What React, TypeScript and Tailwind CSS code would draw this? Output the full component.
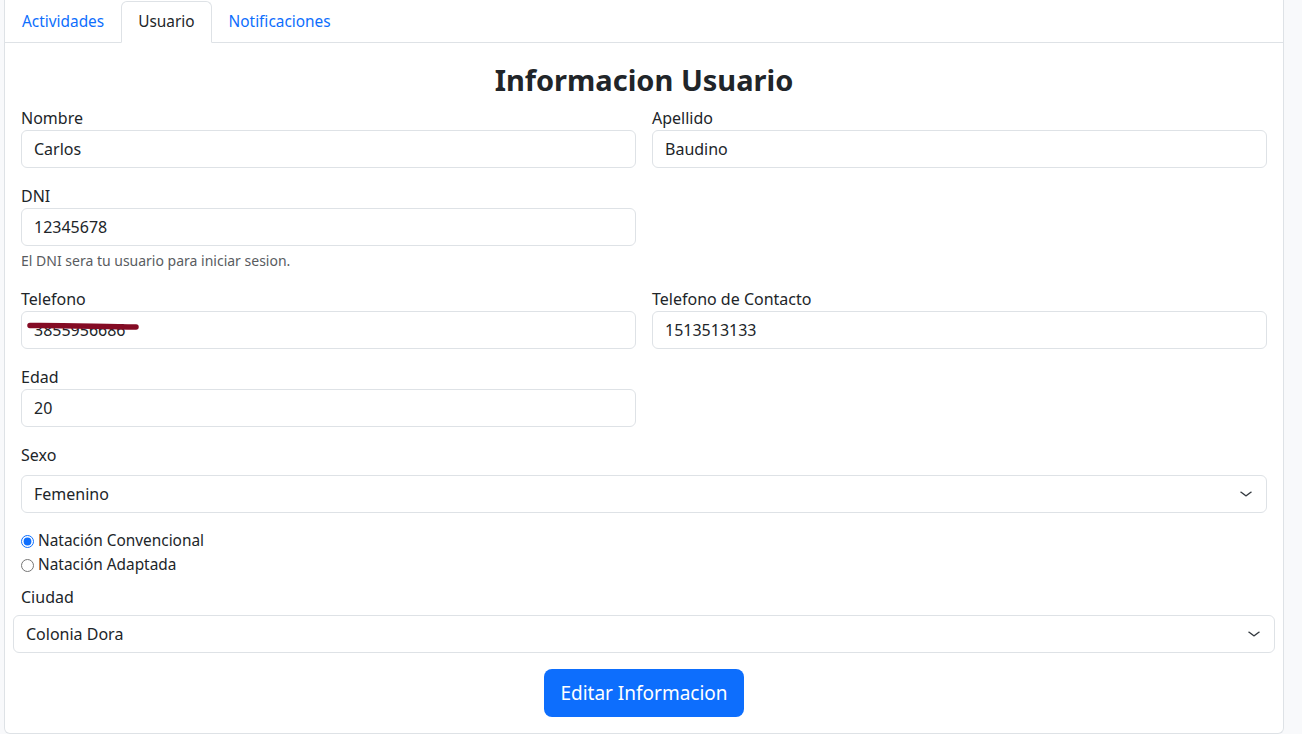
import React from 'react';

function Chevron() {
  return (
    <svg
      viewBox="0 0 16 16"
      className="absolute right-[12px] top-1/2 -translate-y-1/2 w-4 h-3"
      preserveAspectRatio="none"
      fill="none"
      stroke="#343a40"
      strokeWidth="1.7"
      strokeLinecap="round"
      strokeLinejoin="round"
    >
      <path d="m3 5.5 5 5 5-5" />
    </svg>
  );
}

function Field({ label, value, help }: { label: string; value: string; help?: string }) {
  return (
    <div className="flex flex-col">
      <label className="h-6 leading-6 text-base">{label}</label>
      <div className="h-[38px] border border-[#dee2e6] rounded-[6px] px-3 flex items-center text-base">
        {value}
      </div>
      {help && <div className="mt-1 text-[14px] leading-[21px] text-[#595c5f]">{help}</div>}
    </div>
  );
}

function SelectBox({ value }: { value: string }) {
  return (
    <div className="relative h-[38px] border border-[#dee2e6] rounded-[6px] px-3 flex items-center text-base">
      {value}
      <Chevron />
    </div>
  );
}

export default function App() {
  return (
    <div className="h-[734px] bg-[#f8f9fb] pl-1 pr-[18px] overflow-hidden font-['Noto_Sans',sans-serif] text-[#212529]">
      <div className="h-full bg-white border-x border-b border-[#dee2e6] rounded-b-[6px] flex flex-col">
        {/* tabs */}
        <div className="h-[43px] pt-px flex border-b border-[#dee2e6] text-[15.4px]">
          <div className="px-4 h-[41px] leading-[40px] text-[#0d6efd] border border-transparent">Actividades</div>
          <div className="px-4 h-[42px] leading-[40px] bg-white border border-[#dee2e6] border-b-white rounded-t-[6px] -mb-px">
            Usuario
          </div>
          <div className="px-4 h-[41px] leading-[40px] text-[#0d6efd] border border-transparent">Notificaciones</div>
        </div>

        <div className="px-4 flex flex-col">
          <h2 className="mt-[18px] h-[38px] leading-[38px] text-center text-[29px] font-bold">Informacion Usuario</h2>

          <div className="mt-[7px] grid grid-cols-2 gap-x-4">
            <Field label="Nombre" value="Carlos" />
            <Field label="Apellido" value="Baudino" />
          </div>

          <div className="mt-4 grid grid-cols-2 gap-x-4">
            <Field label="DNI" value="12345678" help="El DNI sera tu usuario para iniciar sesion." />
          </div>

          <div className="mt-4 grid grid-cols-2 gap-x-4">
            <div className="relative">
              <Field label="Telefono" value="3855956686" />
              <svg className="absolute left-[6px] top-[34px] w-[112px] h-[10px]" viewBox="0 0 112 10" fill="none">
                <path d="M3 4.5 C30 4 70 5.5 109 6" stroke="#840b24" strokeWidth="5.5" strokeLinecap="round" />
              </svg>
            </div>
            <Field label="Telefono de Contacto" value="1513513133" />
          </div>

          <div className="mt-4 grid grid-cols-2 gap-x-4">
            <Field label="Edad" value="20" />
          </div>

          <label className="mt-4 h-6 leading-6">Sexo</label>
          <div className="mt-2">
            <SelectBox value="Femenino" />
          </div>

          <div className="mt-4 flex flex-col text-[15.4px]">
            <label className="h-6 flex items-center gap-[4px]">
              <input type="radio" name="tipo" defaultChecked className="m-0 w-[13px] h-[13px] accent-[#0d6efd]" />
              <span>Natación Convencional</span>
            </label>
            <label className="h-6 flex items-center gap-[4px]">
              <input type="radio" name="tipo" className="m-0 w-[13px] h-[13px]" />
              <span>Natación Adaptada</span>
            </label>
          </div>

          <label className="mt-2 h-6 leading-6">Ciudad</label>
          <div className="mt-[6px] -mx-2">
            <SelectBox value="Colonia Dora" />
          </div>

          <div className="mt-4 flex justify-center">
            <button className="h-12 px-4 rounded-[8px] bg-[#0d6efd] text-white text-[19px] leading-[30px]">
              Editar Informacion
            </button>
          </div>
        </div>
      </div>
    </div>
  );
}
